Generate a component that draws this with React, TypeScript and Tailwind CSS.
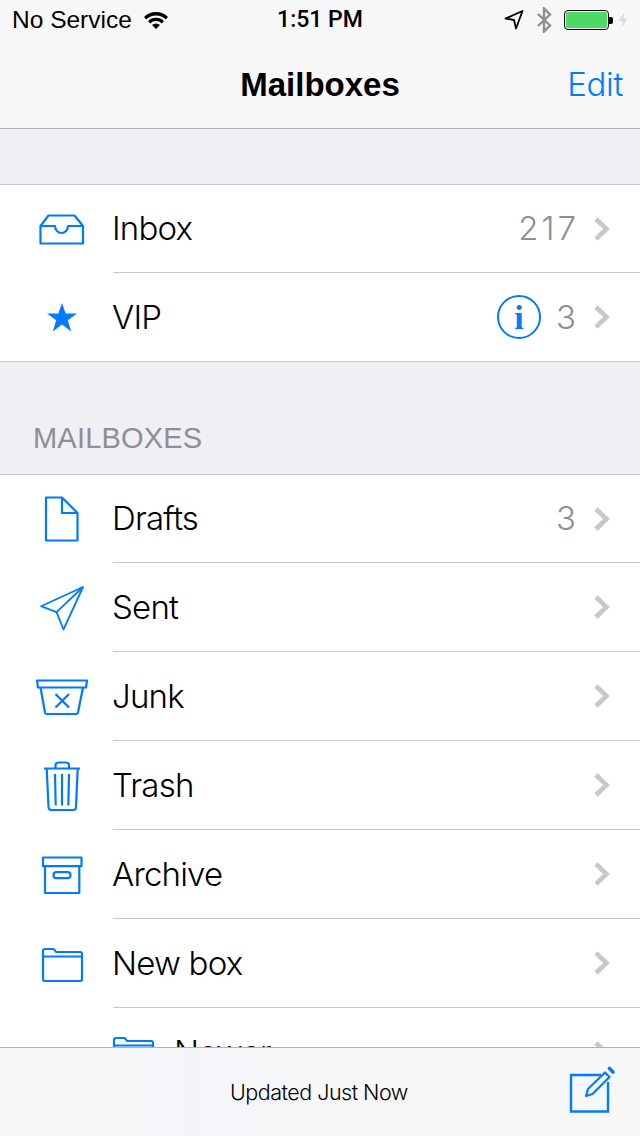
import type { ReactNode } from 'react';

const blue = '#007aff';

function Icon({ children }: { children: ReactNode }) {
  return (
    <svg viewBox="0 0 64 64" width="64" height="64" fill="none" stroke={blue} strokeWidth="2.2" strokeLinejoin="round">
      {children}
    </svg>
  );
}

const InboxIcon = () => (
  <Icon>
    <path d="M10.5 29 L18.5 18.5 H44.5 L53 29 V46.5 H10.5 Z" />
    <path d="M10.5 29 H25 a6.5 7 0 0 0 13 0 H53" />
  </Icon>
);

const StarIcon = () => (
  <Icon>
    <path fill={blue} stroke="none" d="M32 18 L35.6 28.5 L47 28.5 L37.8 35.2 L41.2 46.5 L32 39.6 L22.8 46.5 L26.2 35.2 L17 28.5 L28.4 28.5 Z" />
  </Icon>
);

const DraftsIcon = () => (
  <Icon>
    <path d="M16 10.5 H32 L47.5 26 V53.5 H16 Z" />
    <path d="M32 10.5 V26 H47.5" />
  </Icon>
);

const SentIcon = () => (
  <Icon>
    <path strokeWidth="1.8" d="M53 11 L11 30.2 L26.5 36.2 L33.5 53.5 Z" />
    <path strokeWidth="1.8" d="M53 11 L26.5 36.2" />
  </Icon>
);

const JunkIcon = () => (
  <Icon>
    <path d="M7 15.5 H57 L56 22.5 H8 Z" />
    <path d="M10.5 22.5 L15 47.5 a2 2 0 0 0 2 1.5 H46 a2 2 0 0 0 2 -1.5 L53 22.5" />
    <path d="M25.5 29 L39 42.5 M39 29 L25.5 42.5" />
  </Icon>
);

const TrashIcon = () => (
  <Icon>
    <path d="M14 14.5 H50" />
    <path d="M25.5 14.5 V11.5 a3 3 0 0 1 3 -3 H36 a3 3 0 0 1 3 3 V14.5" />
    <path d="M16.7 14.5 L18.5 53 a3 3 0 0 0 3 3 H43 a3 3 0 0 0 3 -3 L47.7 14.5" />
    <path d="M25 20 L25.7 51.5 M32 20 V51.5 M39 20 L38.3 51.5" />
  </Icon>
);

const ArchiveIcon = () => (
  <Icon>
    <path d="M13 14.5 H51.5 V23.2 H13 Z" />
    <path d="M15 23.2 V50 H49.3 V23.2" />
    <rect x="23.5" y="29.2" width="17" height="6" rx="3" />
  </Icon>
);

const FolderIcon = () => (
  <Icon>
    <path d="M13 24.5 V19 a2 2 0 0 1 2 -2 H23 a2 2 0 0 1 1.5 0.8 L26 20 H50 a2 2 0 0 1 2 2 V47 a2 2 0 0 1 -2 2 H15 a2 2 0 0 1 -2 -2 Z" />
    <path d="M13 24.5 H52" />
  </Icon>
);

function Chevron() {
  return (
    <svg viewBox="0 0 16 24" width="16" height="24" fill="none" stroke="#c7c7cc" strokeWidth="4.6" className="ml-[18px] shrink-0">
      <path d="M2 2 L12.5 12 L2 22" />
    </svg>
  );
}

type RowProps = {
  icon: ReactNode;
  label: string;
  count?: string;
  vip?: boolean;
  first?: boolean;
  last?: boolean;
  nested?: boolean;
};

function Row({ icon, label, count, vip, first, last, nested }: RowProps) {
  return (
    <div className={`flex bg-white ${first ? 'h-[88px]' : 'h-[89px]'} ${last ? 'border-b border-[#c8c7cc]' : ''}`}>
      <div className={`shrink-0 flex items-center ${nested ? 'w-[175px] pl-[101px]' : 'w-[113px] pl-[30px]'}`}>{icon}</div>
      <div className={`flex-1 flex items-center pr-[30px] ${last || nested ? '' : 'border-b border-[#c8c7cc]'}`}>
        <span className="flex-1 -ml-[1px] mt-[1px] text-[33px] font-light tracking-[-0.8px] text-black">{label}</span>
        {vip && (
          <span className="w-[44px] h-[44px] mr-[15px] rounded-full border-2 border-[#007aff] flex items-center justify-center text-[34px] font-bold text-[#007aff] font-['Liberation_Serif',serif]">
            i
          </span>
        )}
        {count && <span className="mt-[1px] -mr-[3px] text-[33px] font-light tracking-[3px] text-[#8e8e93]">{count}</span>}
        <Chevron />
      </div>
    </div>
  );
}

function StatusBar() {
  return (
    <div className="grid grid-cols-3 items-center h-[40px] pl-[12px] pr-[12px] text-black">
      <div className="flex items-center gap-[12px]">
        <span className="whitespace-nowrap text-[24.5px] font-['Liberation_Sans',sans-serif]">No Service</span>
        <svg viewBox="0 0 24 18" width="24" height="18" fill="black">
          <path d="M0 6 A17 17 0 0 1 24 6 L21.8 8.4 A14 14 0 0 0 2.2 8.4 Z" />
          <path d="M4 10 A11.5 11.5 0 0 1 20 10 L17.8 12.4 A8.4 8.4 0 0 0 6.2 12.4 Z" />
          <path d="M8 14 A6 6 0 0 1 16 14 L12 18 Z" />
        </svg>
      </div>
      <div className="pt-[1px] text-center text-[23px] font-medium whitespace-nowrap font-['Roboto',sans-serif]">1:51 PM</div>
      <div className="flex items-center justify-end">
        <svg viewBox="0 0 20 20" width="20" height="20" fill="none" stroke="black" strokeWidth="1.8" className="mr-[12px]">
          <path d="M18.5 1 L1.5 8.5 L10 10 L12 18.5 Z" strokeLinejoin="round" />
        </svg>
        <svg viewBox="0 0 16 26" width="16" height="26" fill="none" stroke="#8e8e8e" strokeWidth="2.4" className="mr-[12px]">
          <path d="M2 7 L14 18.5 L8 24.5 V1.5 L14 7.5 L2 19" />
        </svg>
        <div className="w-[45px] h-[20px] rounded-[4px] border border-black p-[1px]">
          <div className="w-full h-full rounded-[2px] bg-[#4cd964]" />
        </div>
        <div className="w-[4px] h-[7px] rounded-r-[2px] bg-black mr-[5px]" />
        <svg viewBox="0 0 10 16" width="10" height="16" fill="#dcdcdc">
          <path d="M6.5 0 L0.5 9 H4.5 L3.5 16 L9.5 6.5 H5.5 Z" />
        </svg>
      </div>
    </div>
  );
}

export default function App() {
  return (
    <div className="w-[640px] h-[1136px] flex flex-col overflow-hidden bg-[#efeff4] font-['Inter','Liberation_Sans',sans-serif]">
      {/* Nav */}
      <div className="shrink-0 h-[129px] bg-[#f7f7f8] border-b border-[#b2b2b2]">
        <StatusBar />
        <div className="grid grid-cols-3 items-center h-[88px] pt-[1px] px-[17px]">
          <div />
          <div className="text-center text-[33px] font-bold text-black whitespace-nowrap font-['Liberation_Sans',sans-serif]">Mailboxes</div>
          <div className="text-right text-[33px] font-light tracking-[-0.3px] text-[#007aff]">Edit</div>
        </div>
      </div>

      {/* List */}
      <div className="flex-1 min-h-0 overflow-hidden">
        <div className="h-[55px]" />
        <div className="border-t border-[#c8c7cc]">
          <Row icon={<InboxIcon />} label="Inbox" count="217" first />
          <Row icon={<StarIcon />} label="VIP" count="3" vip last />
        </div>
        <div className="h-[112px] flex items-end pl-[33px] pb-[18px] text-[29px] leading-[36px] tracking-[0.2px] text-[#8e8e93] font-['Liberation_Sans',sans-serif]">MAILBOXES</div>
        <div className="border-t border-[#c8c7cc]">
          <Row icon={<DraftsIcon />} label="Drafts" count="3" first />
          <Row icon={<SentIcon />} label="Sent" />
          <Row icon={<JunkIcon />} label="Junk" />
          <Row icon={<TrashIcon />} label="Trash" />
          <Row icon={<ArchiveIcon />} label="Archive" />
          <Row icon={<FolderIcon />} label="New box" />
          <Row icon={<FolderIcon />} label="Newer" nested />
        </div>
      </div>

      {/* Toolbar */}
      <div className="shrink-0 h-[89px] flex items-center bg-[linear-gradient(90deg,#f7f7f8_15%,#f3f5f9_30%,#f7f7f8_50%)] border-t border-[#b2b2b2] pl-[230px] pr-[26px]">
        <span className="flex-1 text-[21.5px] font-light tracking-[-0.5px] text-black">Updated Just Now</span>
        <svg viewBox="0 0 44 48" width="44" height="48" fill="none" stroke={blue} strokeWidth="2.4" className="-mt-[4px] overflow-visible">
          <path d="M31 9 H1 V45.5 H38 V16" />
          <path d="M16 30 L18 23 L35 6.5 L39.5 11 L22.5 28 Z" strokeWidth="2.2" strokeLinejoin="round" />
          <path d="M39.5 2.5 L43 6" strokeWidth="3.6" strokeLinecap="round" />
        </svg>
      </div>
    </div>
  );
}
